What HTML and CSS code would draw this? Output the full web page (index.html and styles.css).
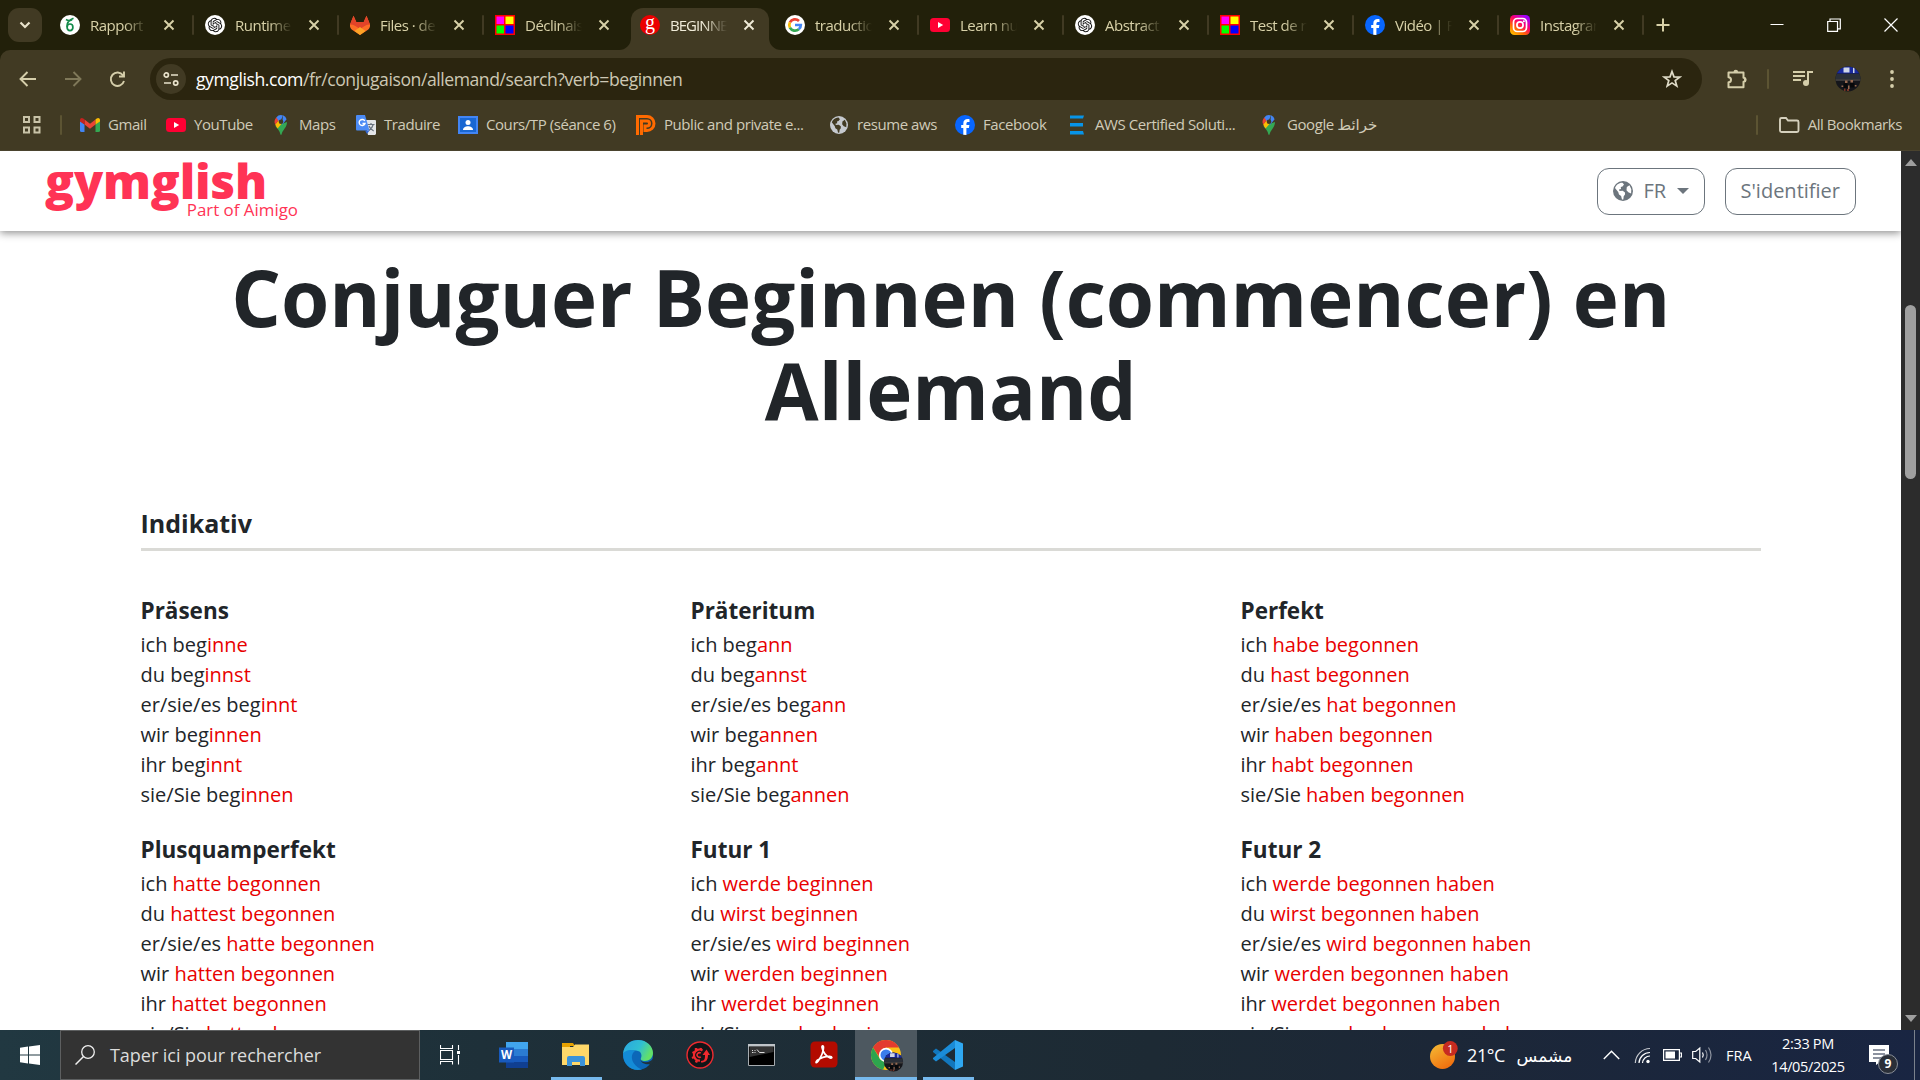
FILE: index.html
```html
<!DOCTYPE html>
<html lang="fr">
<head>
<meta charset="utf-8">
<title>Conjuguer Beginnen</title>
<link rel="stylesheet" href="styles.css">
</head>
<body>
<svg class="defs" aria-hidden="true">
  <linearGradient id="ig" x1="0" y1="1" x2=".7" y2="0"><stop offset="0" stop-color="#ffd600"/><stop offset=".35" stop-color="#ff6a00"/><stop offset=".65" stop-color="#ff0069"/><stop offset="1" stop-color="#a000ff"/></linearGradient>
  <linearGradient id="sun" x1="0" y1="0" x2=".6" y2="1"><stop offset="0" stop-color="#f5bd36"/><stop offset="1" stop-color="#f0700f"/></linearGradient>
  <linearGradient id="edgeA" x1="0" y1="0" x2="1" y2=".4"><stop offset="0" stop-color="#2aa5e0"/><stop offset=".6" stop-color="#30bfd2"/><stop offset="1" stop-color="#62e068"/></linearGradient>
  <symbol id="x" viewBox="0 0 12 12"><path d="M1.500 1.500l9 9M10.500 1.500l-9 9" fill="none" stroke="currentColor" stroke-width="1.900"/></symbol>
  <symbol id="gpt" viewBox="0 0 20 20"><circle cx="10" cy="10" r="10" fill="#fff"/><path transform="translate(2.800 2.800) scale(.6)" fill="#111" d="M22.2819 9.8211a5.9847 5.9847 0 0 0-.5157-4.9108 6.0462 6.0462 0 0 0-6.5098-2.9A6.0651 6.0651 0 0 0 4.9807 4.1818a5.9847 5.9847 0 0 0-3.9977 2.9 6.0462 6.0462 0 0 0 .7427 7.0966 5.98 5.98 0 0 0 .511 4.9107 6.051 6.051 0 0 0 6.5146 2.9001A5.9847 5.9847 0 0 0 13.2599 24a6.0557 6.0557 0 0 0 5.7718-4.2058 5.9894 5.9894 0 0 0 3.9977-2.9001 6.0557 6.0557 0 0 0-.7475-7.0729zm-9.022 12.6081a4.4755 4.4755 0 0 1-2.8764-1.0408l.1419-.0804 4.7783-2.7582a.7948.7948 0 0 0 .3927-.6813v-6.7369l2.02 1.1686a.071.071 0 0 1 .038.052v5.5826a4.504 4.504 0 0 1-4.4945 4.4944zm-9.6607-4.1254a4.4708 4.4708 0 0 1-.5346-3.0137l.142.0852 4.783 2.7582a.7712.7712 0 0 0 .7806 0l5.8428-3.3685v2.3324a.0804.0804 0 0 1-.0332.0615L9.74 19.9502a4.4992 4.4992 0 0 1-6.1408-1.6464zM2.3408 7.8956a4.485 4.485 0 0 1 2.3655-1.9728V11.6a.7664.7664 0 0 0 .3879.6765l5.8144 3.3543-2.0201 1.1685a.0757.0757 0 0 1-.071 0l-4.8303-2.7865A4.504 4.504 0 0 1 2.3408 7.872zm16.5963 3.8558L13.1038 8.364 15.1192 7.2a.0757.0757 0 0 1 .071 0l4.8303 2.7913a4.4944 4.4944 0 0 1-.6765 8.1042v-5.6772a.79.79 0 0 0-.407-.667zm2.0107-3.0231l-.142-.0852-4.7735-2.7818a.7759.7759 0 0 0-.7854 0L9.409 9.2297V6.8974a.0662.0662 0 0 1 .0284-.0615l4.8303-2.7866a4.4992 4.4992 0 0 1 6.6802 4.66zM8.3065 12.863l-2.02-1.1638a.0804.0804 0 0 1-.038-.0567V6.0742a4.4992 4.4992 0 0 1 7.3757-3.4537l-.142.0805L8.704 5.459a.7948.7948 0 0 0-.3927.6813zm1.0976-2.3654l2.602-1.4998 2.6069 1.4998v2.9994l-2.5974 1.4997-2.6067-1.4997Z"/></symbol>
  <symbol id="squares" viewBox="0 0 20 20"><path fill="#f00" d="M0 0h20v20H0z"/><path fill="#f0f" d="M1.500 1.500h7.500v7.500H1.500z"/><path fill="#ff0" d="M10.500 1.500h8v7.500h-8z"/><path fill="#0f0" d="M1.500 10.500h7.500v8H1.500z"/><path fill="#00f" d="M10.500 10.500h8v8h-8z"/></symbol>
  <symbol id="yt" viewBox="0 0 20 20"><rect y="3" width="20" height="14" rx="3.500" fill="#ff0033"/><path d="M8 7l5.200 3L8 13z" fill="#fff"/></symbol>
  <symbol id="fb" viewBox="0 0 20 20"><circle cx="10" cy="10" r="10" fill="#0866ff"/><path fill="#fff" d="M8.300 19.800V13H6.200v-3h2.100V8.700c0-3.200 1.600-4.700 4.500-4.700.7 0 1.300.1 1.700.2v2.700h-1.200c-1.400 0-1.900.6-1.900 1.800V10h3l-.5 3h-2.500v6.900z"/></symbol>
  <symbol id="pin" viewBox="0 0 20 20"><path fill="#34a853" d="M4.500 11C6 13.500 8.500 15 9.400 19.200c.2 1 1 1 1.200 0C11.500 15 16 12.500 16 7z"/><path fill="#fbbc04" d="M8 4.500L4.200 9.600c.5 1.500 1.500 2.700 2.400 3.900L13 6z"/><path fill="#ea4335" d="M5.300 2.500A6.500 6.500 0 0 0 4.200 9.600L9 4z"/><path fill="#4285f4" d="M5.300 2.500A6 6 0 0 1 12 .4L10 5l-2 1.200z"/><path fill="#4285f4" d="M12 .3a6 6 0 0 1 3.600 3.900L11 10z"/><circle cx="10" cy="6.800" r="2.300" fill="#413a23"/></symbol>
  <symbol id="globe" viewBox="0 0 20 20"><circle cx="10" cy="10" r="10" fill="currentColor"/><path fill="var(--land)" d="M2 7c1-3 4-5.500 7.500-5.300L11 3.500 9.500 5.500 7.800 6 8 8 6 8.600 6.500 10l3.200-.2 2.300 1.700v2l-1.300 1.700-.4 3.200-1.300.1-.9-3.500L6 13.500 5.200 11zM13.800 6l2.700-1.800 1.800 4-.2 4.300-2.800-1.200-1.800-2z"/></symbol>
  <symbol id="avatar" viewBox="0 0 26 26"><clipPath id="avc"><circle cx="13" cy="13" r="12.500"/></clipPath><g clip-path="url(#avc)"><path fill="#15161b" d="M0 0h26v26H0z"/><path fill="#1a2a9e" d="M0 0h26v7.500H0z"/><path fill="#cfd6e6" d="M8.500 1.500h6v5h-6zM18 1h1.500v6H18z"/><path fill="#2a2f38" d="M0 8h26v5H0z"/><path fill="#3b3a3b" d="M0 13h26v2H0z"/><path fill="#9a6b52" d="M10 14.500h2.500V17H10zM15.500 14h2.500v2.500h-2.500zM6.500 19.500h2v1.500h-2zM19.500 19h2v1.500h-2zM13 19.500h1.500v3.500H13z"/><path fill="#07080a" d="M8.500 17.200h4v5h-4zM15 17h4.500v4.500H15z"/><path fill="#7a3526" d="M9 22.500h1.500V25H9zM12 23h2v2h-2z"/></g></symbol>
</svg>

<header class="tabstrip">
  <div class="tab-search"><svg width="12" height="8" viewBox="0 0 12 8"><path d="M1.500 1.500L6 6l4.500-4.500" fill="none" stroke="#e8e2cb" stroke-width="2.200"/></svg></div>
  <div class="tab"><svg class="fav" viewBox="0 0 20 20"><circle cx="10" cy="10" r="10" fill="#fff"/><g fill="none" stroke="#138a4b" stroke-width="1.700"><ellipse cx="10" cy="12.300" rx="2.900" ry="3.300"/><path d="M7.200 12C6.500 8 9 5.200 13.500 3.300M6 4.500c2 1.300 4 1.300 6 .2"/></g></svg><span class="t">Rapport</span><svg class="close"><use href="#x"/></svg></div>
  <div class="tab"><svg class="fav"><use href="#gpt"/></svg><span class="t">Runtime</span><svg class="close"><use href="#x"/></svg></div>
  <div class="tab"><svg class="fav" viewBox="0 0 20 20"><path fill="#fc6d26" d="M3.500.8L0 9.500c-.3 2 .5 4 2 5.300L10 20l8-5.200c1.500-1.300 2.300-3.300 2-5.300L16.500.8 13.700 7H6.300z"/><path fill="#e24329" d="M3.500.8L0 9.500c4 0 7 2 10 5 3-3 6-5 10-5L16.500.8 13.700 7H6.300z"/><path fill="#fca326" d="M4.500 16L10 12l5.500 4L10 20z"/></svg><span class="t">Files · de</span><svg class="close"><use href="#x"/></svg></div>
  <div class="tab nosep"><svg class="fav"><use href="#squares"/></svg><span class="t">Déclinais</span><svg class="close"><use href="#x"/></svg></div>
  <div class="tab active nosep"><svg class="flare left" viewBox="0 0 12 12"><path d="M12 0v12H0A12 12 0 0 0 12 0z"/></svg><svg class="flare right" viewBox="0 0 12 12"><path d="M0 0v12h12A12 12 0 0 1 0 0z"/></svg><span class="fav gbadge">g</span><span class="t">BEGINNE</span><svg class="close"><use href="#x"/></svg></div>
  <div class="tab"><svg class="fav" viewBox="0 0 20 20"><circle cx="10" cy="10" r="10" fill="#fff"/><g fill="none" stroke-width="2.700"><path stroke="#ea4335" d="M4.900 7.400A5.800 5.800 0 0 1 14 5.900"/><path stroke="#fbbc04" d="M4.900 7.400a5.800 5.800 0 0 0 0 5.200"/><path stroke="#34a853" d="M4.900 12.600a5.800 5.800 0 0 0 8.900 1.700"/><path stroke="#4285f4" d="M13.800 14.300A5.600 5.600 0 0 0 15.800 10H10"/></g></svg><span class="t">traductio</span><svg class="close"><use href="#x"/></svg></div>
  <div class="tab"><svg class="fav"><use href="#yt"/></svg><span class="t">Learn nu</span><svg class="close"><use href="#x"/></svg></div>
  <div class="tab"><svg class="fav"><use href="#gpt"/></svg><span class="t">Abstract</span><svg class="close"><use href="#x"/></svg></div>
  <div class="tab"><svg class="fav"><use href="#squares"/></svg><span class="t">Test de n</span><svg class="close"><use href="#x"/></svg></div>
  <div class="tab"><svg class="fav"><use href="#fb"/></svg><span class="t">Vidéo | F</span><svg class="close"><use href="#x"/></svg></div>
  <div class="tab"><svg class="fav" viewBox="0 0 20 20"><rect width="20" height="20" rx="4.500" fill="url(#ig)"/><g fill="none" stroke="#fff" stroke-width="1.700"><rect x="3.500" y="3.500" width="13" height="13" rx="3.800"/><circle cx="10" cy="10" r="3.100"/></g><circle cx="13.900" cy="6.200" r="1" fill="#fff"/></svg><span class="t">Instagran</span><svg class="close"><use href="#x"/></svg></div>
  <svg class="plus" width="14" height="14" viewBox="0 0 14 14"><path d="M7 .5v13M.5 7h13" stroke="#d8d1a8" stroke-width="2"/></svg>
  <div class="wincontrols">
    <svg width="14" height="14" viewBox="0 0 14 14"><path d="M.5 6.500h13" stroke="#fff"/></svg>
    <svg width="14" height="14" viewBox="0 0 14 14"><path d="M.7 3.500h9.800v9.800H.7zM3 3.500V1h10.300v9.800h-2.800" fill="none" stroke="#fff" stroke-width="1.200"/></svg>
    <svg width="14" height="14" viewBox="0 0 14 14"><path d="M.5.500l13 13M13.500.500l-13 13" stroke="#fff" stroke-width="1.200"/></svg>
  </div>
</header>

<div class="toolbar">
  <svg class="nav" viewBox="0 0 20 20"><path d="M9.500 3L2.500 10l7 7M3 10h15" fill="none" stroke="#d5ceaa" stroke-width="1.900"/></svg>
  <svg class="nav dim" viewBox="0 0 20 20"><path d="M10.500 3l7 7-7 7M17 10H2" fill="none" stroke="#7f7859" stroke-width="1.900"/></svg>
  <svg class="nav" viewBox="0 0 20 20"><path d="M17 12A6.700 6.700 0 1 1 16 6.300M17 2.500V7.500H12" fill="none" stroke="#d5ceaa" stroke-width="1.900"/></svg>
  <div class="omnibox">
    <span class="siteinfo"><svg width="16" height="16" viewBox="0 0 16 16"><g fill="none" stroke="#e8e2cb" stroke-width="1.700"><circle cx="3.300" cy="4" r="2.100"/><path d="M8 4h7M1 12h7"/><circle cx="12.700" cy="12" r="2.100"/></g></svg></span>
    <span class="url"><b>gymglish.com</b>/fr/conjugaison/allemand/search?verb=beginnen</span>
    <svg class="star" width="20" height="20" viewBox="0 0 20 20"><path d="M10 2.500l2 5.400 5.700.2-4.500 3.500 1.600 5.500-4.800-3.200-4.800 3.200 1.600-5.500L2.300 8.100l5.700-.2z" fill="none" stroke="#e0dcc8" stroke-width="1.700"/></svg>
  </div>
  <div class="tools">
    <svg width="22" height="22" viewBox="0 0 22 22"><path d="M2.500 4.500h15v5.200a2 2 0 0 1 0 4v5.500h-15v-5a2.500 2.500 0 0 0 0-5z" fill="none" stroke="#d5ceaa" stroke-width="2" stroke-linejoin="round"/><path d="M7.500 4a2.300 2.300 0 0 1 4.600 0zM18 9.500a2.300 2.300 0 0 1 0 4.600z" fill="#d5ceaa"/></svg>
    <i class="vsep"></i>
    <svg width="20" height="20" viewBox="0 0 20 20"><path d="M0 3h12M0 7h12M0 11h8M15 14V3h5" fill="none" stroke="#d5ceaa" stroke-width="2"/><circle cx="13" cy="14" r="3" fill="#d5ceaa"/></svg>
    <svg width="26" height="26"><use href="#avatar"/></svg>
    <svg width="6" height="20" viewBox="0 0 6 20" fill="#d5ceaa"><circle cx="3" cy="3" r="1.900"/><circle cx="3" cy="10" r="1.900"/><circle cx="3" cy="17" r="1.900"/></svg>
  </div>
</div>

<nav class="bookmarks">
  <svg class="apps" width="20" height="20" viewBox="0 0 20 20"><path d="M2 2h5v5H2zM12.500 2h5v5h-5zM2 12.500h5v5H2zM12.500 12.500h5v5h-5z" fill="none" stroke="#c9c3a8" stroke-width="2"/></svg>
  <i class="vsep"></i>
  <a class="bm"><svg viewBox="0 0 20 20"><path fill="#4285f4" d="M0 6l4.500 3.500V17H1.500A1.500 1.500 0 0 1 0 15.500z"/><path fill="#34a853" d="M20 6l-4.500 3.500V17h3a1.500 1.500 0 0 0 1.500-1.500z"/><path fill="#ea4335" d="M4.500 4.500L10 8.700l5.500-4.200v5L10 13.700 4.500 9.500z"/><path fill="#c5221f" d="M0 5c0-2 2-2.600 3.300-1.500l1.200 1v5L0 6.500z"/><path fill="#fbbc04" d="M20 5c0-2-2-2.600-3.300-1.500l-1.200 1v5L20 6.500z"/></svg><span>Gmail</span></a>
  <a class="bm"><svg><use href="#yt"/></svg><span>YouTube</span></a>
  <a class="bm"><svg><use href="#pin"/></svg><span>Maps</span></a>
  <a class="bm"><svg viewBox="0 0 20 20"><path fill="#e3e5e8" d="M8 5h11a1 1 0 0 1 1 1v13l-1 1h-7z"/><path d="M11.500 9.500h7M15 8v1.500M17.200 9.500c-.6 2.500-2.200 4.500-4.200 6M13 11c.7 2 2.500 4 4.700 5" fill="none" stroke="#68727e" stroke-width="1.200"/><path fill="#4b8bf5" d="M1 0h8l4.500 15.500H1a1 1 0 0 1-1-1V1a1 1 0 0 1 1-1z"/><path fill="#3367d6" d="M9 15.500h4.500L11 19z"/><path d="M8.800 6A3 3 0 1 0 9 8.500H6.500" fill="none" stroke="#fff" stroke-width="1.400"/></svg><span>Traduire</span></a>
  <a class="bm"><svg viewBox="0 0 20 20"><path fill="#4285f4" d="M0 1h20v18H0z"/><path fill="#1967d2" d="M2 3h16v14H2z"/><circle cx="10" cy="7.500" r="2.500" fill="#fff"/><path fill="#fff" d="M5 15c0-5 10-5 10 0z"/></svg><span>Cours/TP (séance 6)</span></a>
  <a class="bm"><svg viewBox="0 0 20 20"><path d="M0 1.500h11a6 6 0 0 1 0 14H9V11h2a1.700 1.700 0 0 0 0-5H5.500v14" fill="none" stroke="#ff6a00" stroke-width="3"/><path d="M1.500 3v17" stroke="#ff6a00" stroke-width="3"/></svg><span>Public and private e...</span></a>
  <a class="bm"><svg class="gl"><use href="#globe"/></svg><span>resume aws</span></a>
  <a class="bm"><svg><use href="#fb"/></svg><span>Facebook</span></a>
  <a class="bm"><svg viewBox="0 0 20 20"><path fill="#0794e8" d="M3 .5h14l-1 3H3zM3 8h13v3.500H3zM3 16h13l1 3.500H3z"/></svg><span>AWS Certified Soluti...</span></a>
  <a class="bm"><svg><use href="#pin"/></svg><span dir="ltr">Google خرائط</span></a>
  <div class="allbm"><i class="vsep"></i><svg width="22" height="18" viewBox="0 0 22 18"><path d="M2 3.500a1.500 1.500 0 0 1 1.500-1.500H8l2 2.500h9a1.500 1.500 0 0 1 1.500 1.500v8.500a1.500 1.500 0 0 1-1.500 1.500H3.500A1.500 1.500 0 0 1 2 14.500z" fill="none" stroke="#d5d0bd" stroke-width="1.900"/></svg><span>All Bookmarks</span></div>
</nav>

<div class="viewport">
  <main class="page">
    <div class="sitebar">
      <div class="logo"><span class="brand">gymglish</span><span class="tagline">Part of Aimigo</span></div>
      <div class="actions">
        <div class="btn fr"><svg width="20" height="20"><use href="#globe"/></svg><span>FR</span><i class="caret"></i></div>
        <div class="btn"><span>S'identifier</span></div>
      </div>
    </div>
    <div class="content">
      <h1>Conjuguer Beginnen (commencer) en Allemand</h1>
      <h2>Indikativ</h2>
      <div class="tenses">
        <section><h3>Präsens</h3><p>ich beg<em>inne</em></p><p>du beg<em>innst</em></p><p>er/sie/es beg<em>innt</em></p><p>wir beg<em>innen</em></p><p>ihr beg<em>innt</em></p><p>sie/Sie beg<em>innen</em></p></section>
        <section><h3>Präteritum</h3><p>ich beg<em>ann</em></p><p>du beg<em>annst</em></p><p>er/sie/es beg<em>ann</em></p><p>wir beg<em>annen</em></p><p>ihr beg<em>annt</em></p><p>sie/Sie beg<em>annen</em></p></section>
        <section><h3>Perfekt</h3><p>ich <em>habe begonnen</em></p><p>du <em>hast begonnen</em></p><p>er/sie/es <em>hat begonnen</em></p><p>wir <em>haben begonnen</em></p><p>ihr <em>habt begonnen</em></p><p>sie/Sie <em>haben begonnen</em></p></section>
        <section><h3>Plusquamperfekt</h3><p>ich <em>hatte begonnen</em></p><p>du <em>hattest begonnen</em></p><p>er/sie/es <em>hatte begonnen</em></p><p>wir <em>hatten begonnen</em></p><p>ihr <em>hattet begonnen</em></p><p>sie/Sie <em>hatten begonnen</em></p></section>
        <section><h3>Futur 1</h3><p>ich <em>werde beginnen</em></p><p>du <em>wirst beginnen</em></p><p>er/sie/es <em>wird beginnen</em></p><p>wir <em>werden beginnen</em></p><p>ihr <em>werdet beginnen</em></p><p>sie/Sie <em>werden beginnen</em></p></section>
        <section><h3>Futur 2</h3><p>ich <em>werde begonnen haben</em></p><p>du <em>wirst begonnen haben</em></p><p>er/sie/es <em>wird begonnen haben</em></p><p>wir <em>werden begonnen haben</em></p><p>ihr <em>werdet begonnen haben</em></p><p>sie/Sie <em>werden begonnen haben</em></p></section>
      </div>
    </div>
  </main>
  <div class="scrollbar"><i class="up"></i><i class="thumb"></i><i class="down"></i></div>
</div>

<footer class="taskbar">
  <div class="start"><svg width="20" height="20" viewBox="0 0 20 20" fill="#fff"><path d="M0 2.700L8 1.600v7.900H0zM9 1.400L20 0v9.500H9zM0 10.500h8v7.900L0 17.300zM9 10.500h11V20L9 18.600z"/></svg></div>
  <div class="search"><svg width="20" height="20" viewBox="0 0 20 20"><circle cx="13" cy="7" r="6.300" fill="none" stroke="#f0f0f0" stroke-width="1.300"/><path d="M8.500 11.500L.5 19.500" stroke="#f0f0f0" stroke-width="1.500"/></svg><span>Taper ici pour rechercher</span></div>
  <div class="taskview"><svg width="20" height="20" viewBox="0 0 20 20" fill="none" stroke="#fff" stroke-width="1.100"><path d="M.5 0v3.500h12V0M.5 5.500h12v9H.5zM.5 19.500V16.500h12v3M18.500 0v5M18.500 10v9.500"/><path fill="#fff" stroke="none" d="M17 6h3v3h-3z"/></svg></div>
  <div class="apps-row">
    <div class="app"><svg viewBox="0 0 30 30"><path fill="#41a5ee" d="M7 2h22v7H7z"/><path fill="#2b7cd3" d="M7 9h22v7H7z"/><path fill="#185abd" d="M7 16h22v6H7z"/><path fill="#103f91" d="M7 22h22v6H7z"/><path fill="#185abd" d="M0 7.500h15v15H0z"/><text x="7.500" y="19" text-anchor="middle" class="wletter">W</text></svg></div>
    <div class="app run"><svg viewBox="0 0 30 30"><path fill="#e6a100" d="M1 3h11l2 3h-5v5H1z"/><path fill="#ffd869" d="M1 7h11l2-2.500h14V25H1z"/><path fill="#3b93da" d="M6 26V18a2 2 0 0 1 2-2h14a2 2 0 0 1 2 2v8h-5v-4h-8v4z"/></svg></div>
    <div class="app"><svg viewBox="0 0 30 30"><circle cx="15" cy="15" r="15" fill="#0c67b8"/><path fill="url(#edgeA)" d="M0 14C1 4 8 0 15 0c9 0 15 6.500 15 13 0 5-4 8-8 8-3 0-5-1-4-3s1-7-5-7.500C7 10 2 11 0 14z"/><path fill="#148bd7" d="M0 14c2-4 8-5 12-3-4 3-4 8-1 12.500 2 3 5 5 8 6C8 32 0 24 0 14z"/><path fill="#1f313a" d="M17.500 18.500C17 21 20 22.500 23 22.300c3-.3 5-1.500 7-3.300l1 3-3 2c-5 1-11-1-10.500-5.500z"/></svg></div>
    <div class="app"><svg viewBox="0 0 30 30"><circle cx="15" cy="15" r="13" fill="#131518" stroke="#ef2b30" stroke-width="1.400"/><path d="M17.500 10.500A5.500 5.500 0 1 0 15 20.500" fill="none" stroke="#f0292e" stroke-width="2.200"/><path d="M11 8v2M7.500 12l2 1M7 18l2.300-1M11 22.500l.8-2M16 8l-.5 2" stroke="#f0292e" stroke-width="2.400"/><path d="M15.800 13.200a2.300 2.300 0 1 0 0 3.600" fill="none" stroke="#f0292e" stroke-width="1.500"/><path fill="#f0292e" d="M16 21c4 0 4-3 4-6h-2.500l4-5.500 3.500 5.500H23c0 5-2 7.500-7 7.500z"/></svg></div>
    <div class="app"><svg viewBox="0 0 30 30"><path fill="#000" stroke="#a7acb0" d="M1.500 4.500h26v21h-26z"/><path fill="#bfc4c8" d="M1 4h27v2.500H1z"/><path fill="#333" d="M2.500 7h24v5L2.500 17z"/><path d="M5 10.500h1M5 12.500h1.500M8 10v1M8 12v1M10 9.500l2.500 3h5" stroke="#ddd" fill="none" stroke-width="1"/></svg></div>
    <div class="app"><svg viewBox="0 0 30 30"><rect x="1.500" y="1.500" width="27" height="26" rx="4.500" fill="#b30b00"/><path d="M8 20.500c-2 2.500-.5 3 1 .8C12 17 14.500 11 14.500 7.500c0-2.500-1.800-2.200-1.500 0 .5 4 4.500 9.500 8 10.500 2.500.7 2.500-1.700-.5-1.700-4 0-9 1.500-12.500 4.200z" fill="none" stroke="#fff" stroke-width="1.700"/></svg></div>
    <div class="app run active"><svg viewBox="0 0 34 34"><circle cx="15" cy="15" r="15" fill="#fbc116"/><path fill="#e33b2e" d="M2 7.500A15 15 0 0 1 28 7.500H15L9 18z"/><path fill="#2da44e" d="M2 7.500L9 19l6 4-3 6.700A15 15 0 0 1 2 7.500z"/><circle cx="15" cy="15" r="7.200" fill="#fff"/><circle cx="15" cy="15" r="5.500" fill="#3b7ded"/><use href="#avatar" x="12.500" y="12" width="20" height="20"/></svg></div>
    <div class="app run"><svg viewBox="0 0 30 30"><path fill="#1277bd" d="M0 11l3-2.500L22 22v8L0 12z"/><path fill="#1a8cd8" d="M0 19l3 2.500L22 8V0L0 18z"/><path fill="#2fa8f2" d="M22 0l8 3.500v23L22 30z"/></svg></div>
  </div>
  <div class="tray">
    <svg class="sun" width="28" height="29" viewBox="0 0 28 29"><circle cx="12.500" cy="15.500" r="12.500" fill="url(#sun)"/><circle cx="20.300" cy="7.500" r="7.400" fill="#c72b20"/><text x="20.300" y="11.500" text-anchor="middle" class="one">1</text></svg>
    <span class="temp">21°C</span><span class="cond">مشمس</span>
    <svg class="i-up" width="17" height="10" viewBox="0 0 17 10"><path d="M.8 9l7.700-7.800L16.200 9" fill="none" stroke="#fff" stroke-width="1.400"/></svg>
    <svg class="i-wifi" width="17" height="17" viewBox="0 0 17 17"><g fill="none" stroke="#fff" stroke-width="1.200"><path d="M1.300 16A15 15 0 0 1 16 1.500" opacity=".75"/><path d="M5 16A11 11 0 0 1 16 5.500M8.500 16A7.500 7.500 0 0 1 16 9"/></g><circle cx="14" cy="14.500" r="1.700" fill="#fff"/></svg>
    <svg class="i-bat" width="19" height="12" viewBox="0 0 19 12"><path d="M.6.6h15.800v10.800H.6zM17 4h1.400v4H17" fill="none" stroke="#fff" stroke-width="1.200"/><path fill="#fff" d="M2.500 2.500h9.500v7H2.500z"/></svg>
    <svg class="i-vol" width="21" height="18" viewBox="0 0 21 18" fill="none" stroke="#fff" stroke-width="1.200"><path d="M.7 5.500h3L7.800 2v14l-4.100-3.500h-3z"/><path d="M10.500 6.500q1.500 2.500 0 5"/><path d="M13.500 4q3 5 0 10M16.500 1.500q5 7.500 0 15" opacity=".5"/></svg>
    <span class="lang">FRA</span>
    <div class="clock"><span>2:33 PM</span><span>14/05/2025</span></div>
    <div class="notif"><svg width="20" height="20" viewBox="0 0 20 20"><path fill="#fff" d="M0 0h20v17h-9l-4 3v-3H0z"/><path d="M4 5h12M4 9h12M4 13h8" stroke="#1a2740" stroke-width="1.200"/></svg><b>9</b></div>
    <i class="peek"></i>
  </div>
</footer>
</body>
</html>
```
FILE: styles.css
```css
* { box-sizing: border-box; }
body {
  margin: 0; width: 1920px; height: 1080px; overflow: hidden;
  display: flex; flex-direction: column;
  font-family: "Open Sans", "Noto Sans", "DejaVu Sans", sans-serif;
  background: #22200a;
}
h1, h2, h3, p { margin: 0; }
svg { display: block; flex: none; }
.defs { position: absolute; width: 0; height: 0; }

/* tab strip */
.tabstrip { display: flex; align-items: center; height: 50px; background: #22200a; position: relative; }
.tab-search { width: 34px; height: 34px; margin: 0 6px 0 8px; border-radius: 11px; background: #413a23; display: flex; align-items: center; justify-content: center; }
.tab {
  position: relative; width: 145px; height: 50px; flex: none; padding-left: 12px;
  display: flex; align-items: center; color: #d8d1a8; font-size: 15px; letter-spacing: -.5px;
}
.tab::after { content: ""; position: absolute; right: -1px; top: 15px; width: 2px; height: 20px; background: #413a23; border-radius: 1px; }
.tab.nosep::after { display: none; }
.fav { width: 20px; height: 20px; flex: none; z-index: 1; }
.t { width: 57px; flex: none; margin: 0 9px 0 10px; overflow: hidden; white-space: nowrap; z-index: 1; -webkit-mask-image: linear-gradient(90deg, #000 60%, transparent); mask-image: linear-gradient(90deg, #000 60%, transparent); }
.close { width: 12px; height: 12px; margin-left: 7px; z-index: 1; }
.tab.active { color: #f0ebd8; }
.tab.active .t { letter-spacing: -.95px; }
.tab.active::before { content: ""; position: absolute; left: 3px; right: 4px; top: 8px; bottom: 0; background: #413a23; border-radius: 12px 12px 0 0; }
.flare { position: absolute; bottom: 0; width: 12px; height: 12px; fill: #413a23; }
.flare.left { left: -9px; }
.flare.right { right: -8px; }
.gbadge { border-radius: 50%; background: #eb0000; color: #fff; font: 20px/14px "Liberation Serif", serif; text-align: center; letter-spacing: 0; }
.plus { margin-left: 13px; }
.wincontrols { margin-left: auto; margin-right: 22px; display: flex; gap: 43px; }

/* toolbar */
.toolbar { display: flex; align-items: center; height: 58px; background: #413a23; border-radius: 10px 10px 0 0; padding: 0 25px 0 18px; }
.nav { width: 20px; height: 20px; margin-right: 25px; }
.nav:nth-child(2) { margin-right: 24px; }
.nav:nth-child(3) { margin-right: 23px; }
.omnibox { width: 1552px; height: 42px; border-radius: 21px; background: #2b250f; display: flex; align-items: center; padding: 0 20px 0 6px; }
.siteinfo { width: 30px; height: 30px; border-radius: 50%; background: #413a23; display: flex; align-items: center; justify-content: center; margin-right: 10px; }
.url { color: #cdc8b4; font-size: 17.600px; letter-spacing: -.44px; white-space: nowrap; }
.url b { font-weight: 400; color: #fff; }
.star { margin-left: auto; }
.tools { display: flex; align-items: center; flex: 1; margin-left: 24px; }
.vsep { width: 2px; height: 20px; background: #5c5433; border-radius: 1px; flex: none; }
.tools .vsep { margin: 0 24px 0 19px; }
.tools svg:nth-of-type(2) { margin-right: 22px; }
.tools svg:nth-of-type(3) { margin-right: 28px; }

/* bookmarks */
.bookmarks {
  display: grid; grid-template-columns: 38px 20px 86px 105px 85px 102px 178px 193px 126px 112px 192px 150px 1fr;
  align-items: center; height: 43px; padding: 0 18px 9px 22px; background: #413a23;
  color: #d0cbb8; font-size: 15px; letter-spacing: -.43px; border-bottom: 1px solid #4a432e;
  white-space: nowrap;
}
.bookmarks span { padding-bottom: 2px; }
.bm { display: flex; align-items: center; gap: 8px; }
.bm svg { width: 20px; height: 20px; }
.bm .gl { width: 18px; height: 18px; margin: 0 1px; color: #c5c9ce; --land: #413a23; }
.allbm { display: flex; align-items: center; justify-content: flex-end; }
.allbm .vsep { margin-right: 20px; }
.allbm svg { margin-right: 8px; }

/* page */
.viewport { display: flex; height: 879px; overflow: hidden; }
.page { width: 1901px; background: #fff; overflow: hidden; }
.sitebar { position: relative; display: flex; justify-content: space-between; height: 80px; padding: 0 45px 0 44px; background: #fff; box-shadow: 0 2px 8px rgba(0, 0, 0, .45); }
.logo { width: 254px; color: #ff3355; display: flex; flex-direction: column; align-items: flex-end; }
.brand { width: 253px; font-size: 48px; font-weight: 800; line-height: 48px; margin-top: 6px; letter-spacing: -.2px; }
.tagline { font-size: 16.900px; line-height: 16px; margin-top: -3px; white-space: nowrap; }
.actions { display: flex; gap: 20px; padding-top: 17px; }
.btn { height: 47px; border: 1px solid #6c757d; border-radius: 12px; padding: 0 15px 2px; display: flex; align-items: center; color: #6c757d; font-size: 20px; white-space: nowrap; --land: #fff; }
.fr { width: 108px; }
.fr span { margin: 0 11px 0 11px; }
.caret { border: 6px solid transparent; border-top-color: #6c757d; border-bottom: 0; }
.content { padding: 20px 140px 0 140.500px; color: #212529; }
h1 { font-size: 78px; line-height: 93px; font-weight: 700; text-align: center; }
h2 { margin-top: 71px; font-size: 25px; line-height: 30px; font-weight: 700; padding-bottom: 10px; border-bottom: 3px solid #dadad6; }
.tenses { display: grid; grid-template-columns: 550px 550px 1fr; row-gap: 26px; margin-top: 46px; }
h3 { font-size: 22.500px; line-height: 28px; margin-bottom: 5px; }
p { font-size: 20px; line-height: 30px; white-space: nowrap; }
em { font-style: normal; color: #e80000; }
.scrollbar { width: 19px; background: #2c2c2c; display: flex; flex-direction: column; align-items: center; }
.up, .down { border: 6.500px solid transparent; }
.up { border-bottom: 7px solid #9f9f9f; border-top: 0; margin-top: 8px; }
.thumb { width: 11px; height: 174px; border-radius: 6px; background: #9f9f9f; margin-top: 139px; }
.down { border-top: 7px solid #9f9f9f; border-bottom: 0; margin-top: auto; margin-bottom: 8px; }

/* taskbar */
.taskbar { display: flex; height: 50px; color: #fff; background: linear-gradient(90deg, #213841 0, #1e3039 25%, #1d2a34 60%, #1c2737 75%, #192542 100%); }
.start { width: 60px; display: flex; align-items: center; justify-content: center; }
.search { width: 360px; border: 1px solid #5d5f60; background: #333; display: flex; align-items: center; padding-left: 14px; gap: 15px; font-size: 18px; letter-spacing: -.04px; color: #dcdcdc; white-space: nowrap; }
.taskview { width: 63px; display: flex; align-items: center; padding-left: 20px; }
.apps-row { display: grid; grid-template-columns: repeat(8, 62px); }
.app { display: flex; align-items: center; justify-content: center; position: relative; }
.app svg { width: 30px; height: 30px; }
.app.run::after { content: ""; position: absolute; left: 6px; right: 5px; bottom: 0; height: 3px; background: #76b9ed; }
.app.active { background: #4d5860; }
.app.active::after { left: 0; right: 0; }
.app.active svg { width: 34px; height: 34px; margin: 4px 0 0 4px; }
.wletter { fill: #fff; font: 700 11.500px "Open Sans", sans-serif; }
.tray { flex: 1; display: flex; align-items: center; justify-content: flex-end; white-space: nowrap; }
.one { fill: #fff; font: 11px "Open Sans", sans-serif; }
.temp { font-size: 18px; width: 49px; margin-left: 9px; letter-spacing: -.4px; }
.cond { font-size: 17px; width: 57px; text-align: center; }
.i-up { margin-left: 30px; }
.i-wifi { margin-left: 14px; }
.i-bat { margin-left: 12px; }
.i-vol { margin-left: 10px; }
.lang { width: 26px; font-size: 14.500px; margin-left: 13px; }
.clock { width: 78px; margin-left: 17px; display: flex; flex-direction: column; align-items: center; font-size: 14.500px; line-height: 23px; letter-spacing: -.35px; }
.notif { position: relative; margin-left: 22px; width: 20px; height: 20px; }
.notif b { position: absolute; left: 9px; top: 9px; width: 20px; height: 20px; border-radius: 50%; border: 1px solid #8a8f98; background: #2a2f38; font-size: 12px; line-height: 18px; text-align: center; }
.peek { width: 1px; height: 50px; background: #7a818c; margin: 0 5px 0 25px; }
```
